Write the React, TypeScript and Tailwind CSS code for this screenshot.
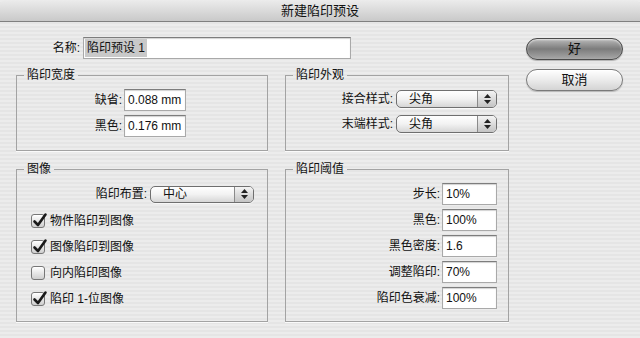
import React from "react";

const FONT = "font-['Liberation_Sans','Noto_Sans_CJK_SC',sans-serif]";

function TextBox({ value, w }: { value: string; w: string }) {
  return (
    <div
      className={`${w} h-[22px] flex items-center bg-white border border-[#a9a9a9] border-t-[#7d7d7d] shadow-[inset_0_1px_1px_rgba(0,0,0,0.18)] pl-[3px] text-[12px] text-[#111]`}
    >
      {value}
    </div>
  );
}

function PopUp({ value, w, h = "h-[18px]" }: { value: string; w: string; h?: string }) {
  return (
    <div
      className={`${w} ${h} flex items-stretch rounded-[5px] border border-[#6f6f6f] bg-gradient-to-b from-white via-[#f2f2f2] to-[#d6d6d6] shadow-[0_1px_0_rgba(255,255,255,0.7)] overflow-hidden`}
    >
      <div className="flex-1 flex items-center pl-[12px] text-[12px] text-[#111]">{value}</div>
      <div className="w-[19px] border-l border-[#8a8a8a] bg-gradient-to-b from-[#f4f4f4] to-[#c4c4c4] flex flex-col items-center justify-center gap-[2px]">
        <svg width="7" height="4" viewBox="0 0 7 4">
          <path d="M3.5 0 L7 4 L0 4 Z" fill="#222" />
        </svg>
        <svg width="7" height="4" viewBox="0 0 7 4">
          <path d="M0 0 L7 0 L3.5 4 Z" fill="#222" />
        </svg>
      </div>
    </div>
  );
}

function Check({ label, checked }: { label: string; checked: boolean }) {
  return (
    <div className="h-[26px] flex items-center pl-[14px] gap-[5px]">
      <div className="relative w-[14px] h-[14px] rounded-[3px] border border-[#777] bg-gradient-to-b from-white to-[#cfcfcf] shadow-[inset_0_1px_0_#fff]">
        {checked && (
          <svg className="absolute -left-[1px] -top-[3px]" width="17" height="17" viewBox="0 0 17 17">
            <path d="M3.5 9.5 L7 13 L14.5 2.5" fill="none" stroke="#1a1a1a" strokeWidth="2.6" strokeLinecap="round" strokeLinejoin="round" />
          </svg>
        )}
      </div>
      <span className="text-[12px] text-[#111]">{label}</span>
    </div>
  );
}

function Group({ title, h, children }: { title: string; h: string; children: React.ReactNode }) {
  return (
    <fieldset className={`${h} border border-[#a3a3a3] shadow-[0_1px_0_rgba(255,255,255,0.8)]`}>
      <legend className="ml-[7px] px-[3px] h-[16px] leading-[16px] text-[12px] text-[#111]">{title}</legend>
      {children}
    </fieldset>
  );
}

function Row({ label, children, gap = "gap-[3px]" }: { label: string; children: React.ReactNode; gap?: string }) {
  return (
    <div className={`flex items-center justify-end ${gap}`}>
      <span className="text-[12px] text-[#111]">{label}</span>
      {children}
    </div>
  );
}

export default function App() {
  return (
    <div
      className={`${FONT} w-[640px] h-[338px] overflow-hidden bg-[repeating-linear-gradient(0deg,#ececec_0px,#ececec_2px,#e5e5e5_2px,#e5e5e5_4px)]`}
    >
      <div className="h-[22px] flex items-center justify-center bg-gradient-to-b from-[#ececec] to-[#c9c9c9] border-b border-[#7f7f7f] rounded-t-[5px] text-[13px] text-[#111]">
        新建陷印预设
      </div>

      <div className="flex pl-[16px] pt-[15px]">
        <div className="w-[493px] flex flex-col">
          <div className="h-[22px] flex items-center">
            <span className="w-[64px] text-right text-[12px] text-[#111]">名称:</span>
            <div className="ml-[3px] w-[268px] h-[22px] flex items-center bg-white border border-[#a9a9a9] border-t-[#7d7d7d] shadow-[inset_0_1px_1px_rgba(0,0,0,0.18)] pl-[1px] text-[12px] text-[#111]">
              <span className="bg-[#c9c9c9] px-[2px] leading-[18px]">陷印预设 1</span>
            </div>
          </div>

          <div className="mt-[8px] grid grid-cols-[252px_224px] gap-x-[17px] gap-y-[10px]">
            <Group title="陷印宽度" h="h-[84px]">
              <div className="pt-[6px] pr-[81px] flex flex-col gap-[4px]">
                <Row label="缺省:" gap="gap-[2px]">
                  <TextBox value="0.088 mm" w="w-[62px]" />
                </Row>
                <Row label="黑色:" gap="gap-[2px]">
                  <TextBox value="0.176 mm" w="w-[62px]" />
                </Row>
              </div>
            </Group>

            <Group title="陷印外观" h="h-[84px]">
              <div className="pt-[7px] pr-[11px] flex flex-col gap-[7px]">
                <Row label="接合样式:">
                  <PopUp value="尖角" w="w-[101px]" />
                </Row>
                <Row label="末端样式:">
                  <PopUp value="尖角" w="w-[101px]" />
                </Row>
              </div>
            </Group>

            <Group title="图像" h="h-[161px]">
              <div className="pt-[8px] pr-[13px] flex justify-end">
                <Row label="陷印布置:">
                  <PopUp value="中心" w="w-[104px]" h="h-[17px]" />
                </Row>
              </div>
              <div className="mt-[5px] flex flex-col">
                <Check label="物件陷印到图像" checked />
                <Check label="图像陷印到图像" checked />
                <Check label="向内陷印图像" checked={false} />
                <Check label="陷印 1-位图像" checked />
              </div>
            </Group>

            <Group title="陷印阈值" h="h-[161px]">
              <div className="pt-[6px] pr-[11px] flex flex-col gap-[4px]">
                <Row label="步长:" gap="gap-[2px]">
                  <TextBox value="10%" w="w-[55px]" />
                </Row>
                <Row label="黑色:" gap="gap-[2px]">
                  <TextBox value="100%" w="w-[55px]" />
                </Row>
                <Row label="黑色密度:" gap="gap-[2px]">
                  <TextBox value="1.6" w="w-[55px]" />
                </Row>
                <Row label="调整陷印:" gap="gap-[2px]">
                  <TextBox value="70%" w="w-[55px]" />
                </Row>
                <Row label="陷印色衰减:" gap="gap-[2px]">
                  <TextBox value="100%" w="w-[55px]" />
                </Row>
              </div>
            </Group>
          </div>
        </div>

        <div className="ml-[17px] pt-[1px] flex flex-col gap-[9px]">
          <button className="w-[97px] h-[22px] rounded-full border border-[#4a4a4a] bg-gradient-to-b from-[#b9b9b9] via-[#7c7c7c] to-[#a8a8a8] shadow-[inset_0_1px_2px_rgba(255,255,255,0.6),0_1px_1px_rgba(0,0,0,0.25)] text-[13px] text-[#111] flex items-center justify-center">
            好
          </button>
          <button className="w-[97px] h-[22px] rounded-full border border-[#7a7a7a] bg-gradient-to-b from-white via-[#ebebeb] to-[#d4d4d4] shadow-[inset_0_1px_1px_#fff,0_1px_1px_rgba(0,0,0,0.2)] text-[13px] text-[#111] flex items-center justify-center">
            取消
          </button>
        </div>
      </div>
    </div>
  );
}
